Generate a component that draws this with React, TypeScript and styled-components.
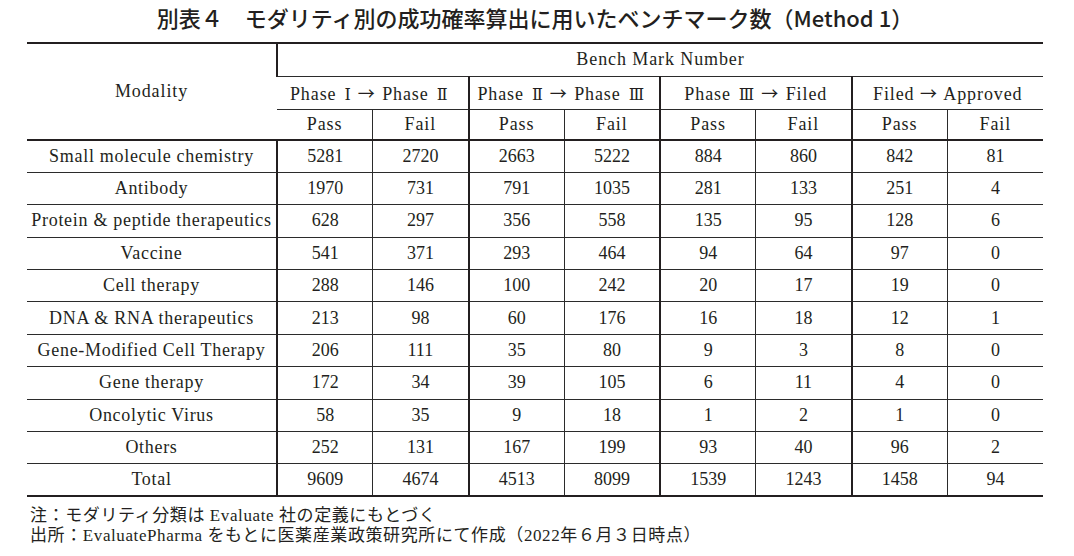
import styled, { createGlobalStyle } from "styled-components";

const GlobalStyle = createGlobalStyle`
  body {
    margin: 0;
    background: #ffffff;
    color: #231f20;
  }
`;

const thin = "1px solid #2b2b2b";
const thick = "2px solid #231f20";

const StyledPage = styled.main`
  width: 1016px;
  padding: 4px 0 0 27px;
`;

const StyledTitle = styled.h1`
  margin: 0 0 12px 0;
  height: 26px;
  font-family: "Noto Sans CJK JP", sans-serif;
  font-size: 22px;
  font-weight: 500;
  line-height: 26px;
  text-align: center;
  color: #231f20;
`;

const StyledTable = styled.table`
  width: 1016px;
  table-layout: fixed;
  border-collapse: collapse;
  border-top: ${thick};
  border-bottom: ${thick};
  font-family: "Liberation Serif", "Noto Sans CJK JP", serif;
  font-size: 18px;
  color: #231f20;
`;

const StyledHeadRow = styled.tr<{ $height: number; $thickBottom?: boolean }>`
  height: ${(p) => p.$height}px;
  border-bottom: ${(p) => (p.$thickBottom ? thick : thin)};
`;

const StyledRow = styled.tr`
  height: 32.4px;
  border-bottom: ${thin};
`;

const StyledCell = styled.td<{ $thickLeft?: boolean; $label?: boolean }>`
  padding: 0;
  text-align: center;
  vertical-align: middle;
  white-space: nowrap;
  letter-spacing: ${(p) => (p.$label ? "0.7px" : "0")};
  border-left: ${(p) => (p.$thickLeft ? thick : thin)};

  &:first-child {
    border-left: none;
  }
`;

const StyledHeadCell = styled(StyledCell).attrs({ as: "th" })`
  font-weight: normal;
  letter-spacing: 0.9px;
`;

const StyledNumeral = styled.span`
  font-family: "DejaVu Serif", "Noto Sans CJK JP", serif;
  font-size: 16px;
  letter-spacing: 0;
  padding: 0 7px 0 8px;
`;

const StyledArrow = styled.span`
  font-family: "Noto Sans CJK JP", sans-serif;
  font-size: 17px;
  letter-spacing: 0;
  padding-right: 2px;
`;

const StyledNotes = styled.div`
  margin: 9px 0 0 3px;
  font-family: "Liberation Serif", "Noto Sans CJK JP", serif;
  font-size: 17px;
  letter-spacing: 0.6px;
  line-height: 20px;
  color: #231f20;

  p {
    margin: 0;
  }
`;

const phases = [
  { from: "Ⅰ", to: "Ⅱ" },
  { from: "Ⅱ", to: "Ⅲ" },
];

const rows: [string, number[]][] = [
  ["Small molecule chemistry", [5281, 2720, 2663, 5222, 884, 860, 842, 81]],
  ["Antibody", [1970, 731, 791, 1035, 281, 133, 251, 4]],
  ["Protein & peptide therapeutics", [628, 297, 356, 558, 135, 95, 128, 6]],
  ["Vaccine", [541, 371, 293, 464, 94, 64, 97, 0]],
  ["Cell therapy", [288, 146, 100, 242, 20, 17, 19, 0]],
  ["DNA & RNA therapeutics", [213, 98, 60, 176, 16, 18, 12, 1]],
  ["Gene-Modified Cell Therapy", [206, 111, 35, 80, 9, 3, 8, 0]],
  ["Gene therapy", [172, 34, 39, 105, 6, 11, 4, 0]],
  ["Oncolytic Virus", [58, 35, 9, 18, 1, 2, 1, 0]],
  ["Others", [252, 131, 167, 199, 93, 40, 96, 2]],
  ["Total", [9609, 4674, 4513, 8099, 1539, 1243, 1458, 94]],
];

const App = () => {
  return (
    <>
      <GlobalStyle />
      <StyledPage>
        <StyledTitle>
          別表４　モダリティ別の成功確率算出に用いたベンチマーク数（Method 1）
        </StyledTitle>
        <StyledTable>
          <colgroup>
            <col style={{ width: 250 }} />
            {Array.from({ length: 8 }).map((_, i) => (
              <col key={i} />
            ))}
          </colgroup>
          <thead>
            <StyledHeadRow $height={33}>
              <StyledHeadCell rowSpan={3}>Modality</StyledHeadCell>
              <StyledHeadCell colSpan={8} $thickLeft>
                Bench Mark Number
              </StyledHeadCell>
            </StyledHeadRow>
            <StyledHeadRow $height={33}>
              {phases.map((p) => (
                <StyledHeadCell key={p.from} colSpan={2} $thickLeft>
                  Phase<StyledNumeral>{p.from}</StyledNumeral>
                  <StyledArrow>→</StyledArrow> Phase
                  <StyledNumeral>{p.to}</StyledNumeral>
                </StyledHeadCell>
              ))}
              <StyledHeadCell colSpan={2} $thickLeft>
                Phase<StyledNumeral>Ⅲ</StyledNumeral>
                <StyledArrow>→</StyledArrow> Filed
              </StyledHeadCell>
              <StyledHeadCell colSpan={2} $thickLeft>
                Filed <StyledArrow>→</StyledArrow> Approved
              </StyledHeadCell>
            </StyledHeadRow>
            <StyledHeadRow $height={31} $thickBottom>
              {Array.from({ length: 8 }).map((_, i) => (
                <StyledHeadCell key={i} $thickLeft={i % 2 === 0}>
                  {i % 2 === 0 ? "Pass" : "Fail"}
                </StyledHeadCell>
              ))}
            </StyledHeadRow>
          </thead>
          <tbody>
            {rows.map(([name, values]) => (
              <StyledRow key={name}>
                <StyledCell $label>{name}</StyledCell>
                {values.map((v, i) => (
                  <StyledCell key={i} $thickLeft={i % 2 === 0}>
                    {v}
                  </StyledCell>
                ))}
              </StyledRow>
            ))}
          </tbody>
        </StyledTable>
        <StyledNotes>
          <p>注：モダリティ分類は Evaluate 社の定義にもとづく</p>
          <p>出所：EvaluatePharma をもとに医薬産業政策研究所にて作成（2022年６月３日時点）</p>
        </StyledNotes>
      </StyledPage>
    </>
  );
};

export default App;
